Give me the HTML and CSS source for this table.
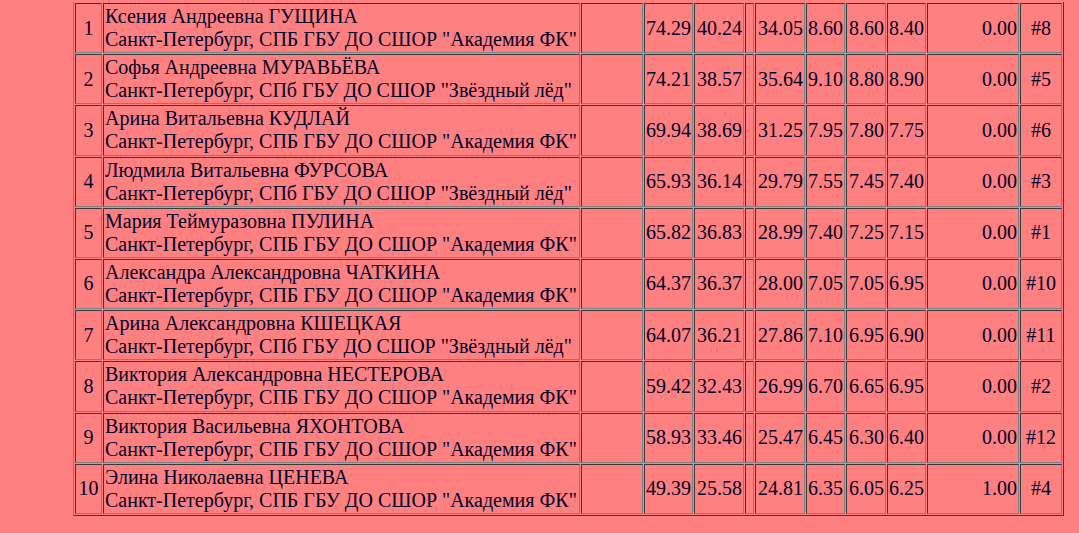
FILE: index.html
```html
<!DOCTYPE html>
<html lang="ru">
<head>
<meta charset="utf-8">
<title>Результаты</title>
<link rel="stylesheet" href="styles.css">
</head>
<body>
<div class="page">
<table class="results">
<tbody>
<tr><td class="rank">1</td><td class="name">Ксения Андреевна ГУЩИНА<br>Санкт-Петербург, СПБ ГБУ ДО СШОР "Академия ФК"</td><td class="blank"></td><td class="num w49">74.29</td><td class="num w50">40.24</td><td class="narrow"></td><td class="num w50">34.05</td><td class="num w39">8.60</td><td class="num w40">8.60</td><td class="num w39">8.40</td><td class="num ded">0.00</td><td class="place">#8</td></tr>
<tr><td class="rank">2</td><td class="name">Софья Андреевна МУРАВЬЁВА<br>Санкт-Петербург, СПб ГБУ ДО СШОР "Звёздный лёд"</td><td class="blank"></td><td class="num w49">74.21</td><td class="num w50">38.57</td><td class="narrow"></td><td class="num w50">35.64</td><td class="num w39">9.10</td><td class="num w40">8.80</td><td class="num w39">8.90</td><td class="num ded">0.00</td><td class="place">#5</td></tr>
<tr><td class="rank">3</td><td class="name">Арина Витальевна КУДЛАЙ<br>Санкт-Петербург, СПБ ГБУ ДО СШОР "Академия ФК"</td><td class="blank"></td><td class="num w49">69.94</td><td class="num w50">38.69</td><td class="narrow"></td><td class="num w50">31.25</td><td class="num w39">7.95</td><td class="num w40">7.80</td><td class="num w39">7.75</td><td class="num ded">0.00</td><td class="place">#6</td></tr>
<tr><td class="rank">4</td><td class="name">Людмила Витальевна ФУРСОВА<br>Санкт-Петербург, СПб ГБУ ДО СШОР "Звёздный лёд"</td><td class="blank"></td><td class="num w49">65.93</td><td class="num w50">36.14</td><td class="narrow"></td><td class="num w50">29.79</td><td class="num w39">7.55</td><td class="num w40">7.45</td><td class="num w39">7.40</td><td class="num ded">0.00</td><td class="place">#3</td></tr>
<tr><td class="rank">5</td><td class="name">Мария Теймуразовна ПУЛИНА<br>Санкт-Петербург, СПБ ГБУ ДО СШОР "Академия ФК"</td><td class="blank"></td><td class="num w49">65.82</td><td class="num w50">36.83</td><td class="narrow"></td><td class="num w50">28.99</td><td class="num w39">7.40</td><td class="num w40">7.25</td><td class="num w39">7.15</td><td class="num ded">0.00</td><td class="place">#1</td></tr>
<tr><td class="rank">6</td><td class="name">Александра Александровна ЧАТКИНА<br>Санкт-Петербург, СПБ ГБУ ДО СШОР "Академия ФК"</td><td class="blank"></td><td class="num w49">64.37</td><td class="num w50">36.37</td><td class="narrow"></td><td class="num w50">28.00</td><td class="num w39">7.05</td><td class="num w40">7.05</td><td class="num w39">6.95</td><td class="num ded">0.00</td><td class="place">#10</td></tr>
<tr><td class="rank">7</td><td class="name">Арина Александровна КШЕЦКАЯ<br>Санкт-Петербург, СПб ГБУ ДО СШОР "Звёздный лёд"</td><td class="blank"></td><td class="num w49">64.07</td><td class="num w50">36.21</td><td class="narrow"></td><td class="num w50">27.86</td><td class="num w39">7.10</td><td class="num w40">6.95</td><td class="num w39">6.90</td><td class="num ded">0.00</td><td class="place">#11</td></tr>
<tr><td class="rank">8</td><td class="name">Виктория Александровна НЕСТЕРОВА<br>Санкт-Петербург, СПБ ГБУ ДО СШОР "Академия ФК"</td><td class="blank"></td><td class="num w49">59.42</td><td class="num w50">32.43</td><td class="narrow"></td><td class="num w50">26.99</td><td class="num w39">6.70</td><td class="num w40">6.65</td><td class="num w39">6.95</td><td class="num ded">0.00</td><td class="place">#2</td></tr>
<tr><td class="rank">9</td><td class="name">Виктория Васильевна ЯХОНТОВА<br>Санкт-Петербург, СПБ ГБУ ДО СШОР "Академия ФК"</td><td class="blank"></td><td class="num w49">58.93</td><td class="num w50">33.46</td><td class="narrow"></td><td class="num w50">25.47</td><td class="num w39">6.45</td><td class="num w40">6.30</td><td class="num w39">6.40</td><td class="num ded">0.00</td><td class="place">#12</td></tr>
<tr><td class="rank">10</td><td class="name">Элина Николаевна ЦЕНЕВА<br>Санкт-Петербург, СПБ ГБУ ДО СШОР "Академия ФК"</td><td class="blank"></td><td class="num w49">49.39</td><td class="num w50">25.58</td><td class="narrow"></td><td class="num w50">24.81</td><td class="num w39">6.35</td><td class="num w40">6.05</td><td class="num w39">6.25</td><td class="num ded">1.00</td><td class="place">#4</td></tr>
</tbody>
</table>
</div>
</body>
</html>
```
FILE: styles.css
```css
html, body {
  margin: 0;
  padding: 0;
  background: #ff8080;
}

.page {
  padding: 2px 0 0 73px;
}

.results {
  width: 991px;
  table-layout: fixed;
  border-collapse: separate;
  border-spacing: 1px;
  border-style: solid;
  border-width: 0 1px 1px 1px;
  border-color: #808080 #3a3a3a #3a3a3a #808080;
  font-family: "Liberation Serif", "Times New Roman", serif;
  font-size: 20px;
  line-height: 23.1px;
  color: #000028;
}

.results td {
  box-sizing: border-box;
  padding: 1px;
  border-style: solid;
  border-width: 1px;
  border-color: #3a3a3a #808080 #808080 #3a3a3a;
  vertical-align: middle;
  white-space: nowrap;
  overflow: hidden;
}

.rank { width: 27px; text-align: center; }
.name { width: 477px; text-align: left; }
.blank { width: 62px; }
.narrow { width: 9px; }
.num { text-align: right; }
.w49 { width: 49px; }
.w50 { width: 50px; }
.w39 { width: 39px; }
.w40 { width: 40px; }
.ded { width: 92px; }
.place { width: 42px; text-align: center; }
```
